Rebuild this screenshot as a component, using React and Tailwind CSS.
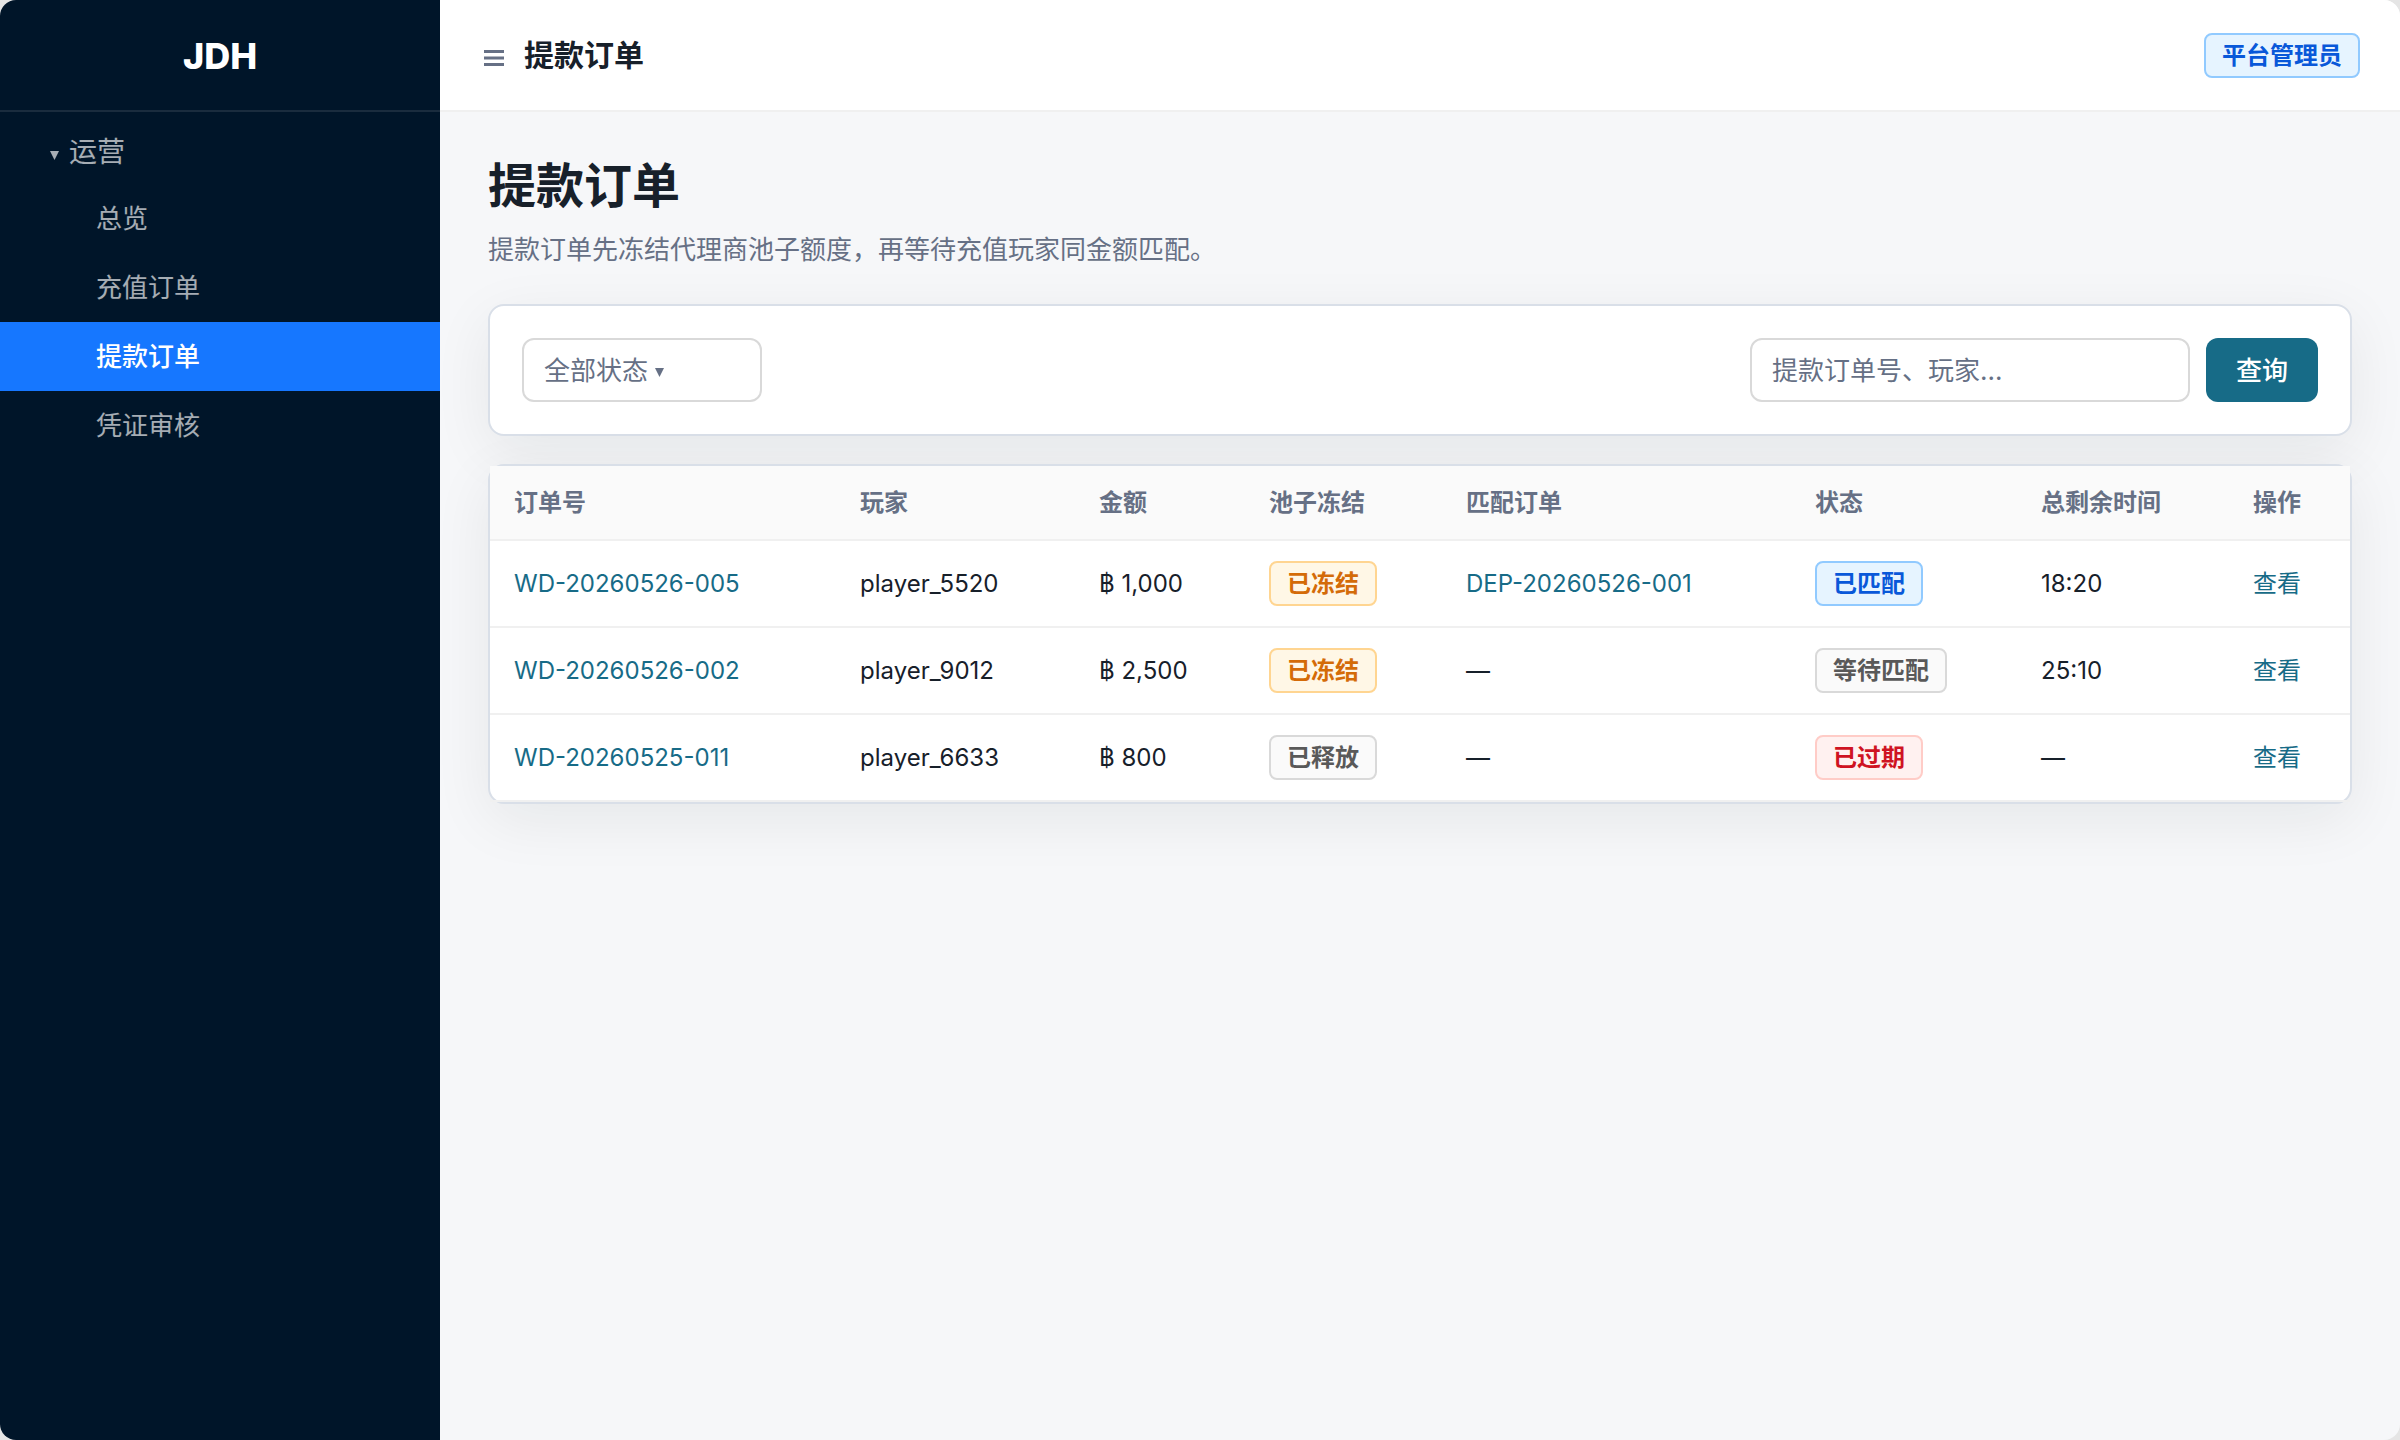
const NAV_ITEMS = [
  { label: "总览" },
  { label: "充值订单" },
  { label: "提款订单", active: true },
  { label: "凭证审核" },
];

const COLUMNS = [
  { label: "订单号", width: "w-[346px]" },
  { label: "玩家", width: "w-[239px]" },
  { label: "金额", width: "w-[170px]" },
  { label: "池子冻结", width: "w-[197px]" },
  { label: "匹配订单", width: "w-[349px]" },
  { label: "状态", width: "w-[226px]" },
  { label: "总剩余时间", width: "w-[212px]" },
  { label: "操作", width: "w-[121px]" },
];

const ORDERS = [
  {
    id: "WD-20260526-005",
    player: "player_5520",
    amount: "฿ 1,000",
    pool: { tone: "orange", label: "已冻结" },
    match: "DEP-20260526-001",
    status: { tone: "blue", label: "已匹配" },
    remaining: "18:20",
  },
  {
    id: "WD-20260526-002",
    player: "player_9012",
    amount: "฿ 2,500",
    pool: { tone: "orange", label: "已冻结" },
    match: null,
    status: { tone: "gray", label: "等待匹配" },
    remaining: "25:10",
  },
  {
    id: "WD-20260525-011",
    player: "player_6633",
    amount: "฿ 800",
    pool: { tone: "gray", label: "已释放" },
    match: null,
    status: { tone: "red", label: "已过期" },
    remaining: "—",
  },
];

const TONES = {
  blue: "border-[#91caff] bg-[#e6f4ff] text-[#0958d9]",
  orange: "border-[#ffd591] bg-[#fff7e6] text-[#d46b08]",
  gray: "border-[#d9d9d9] bg-[#fafafa] text-[#595959]",
  red: "border-[#ffccc7] bg-[#fff1f0] text-[#cf1322]",
};

function Badge({ tone, children }) {
  return (
    <span
      className={`inline-block rounded-lg border-2 px-4 align-top text-2xl leading-[41px] font-semibold whitespace-nowrap ${TONES[tone]}`}
    >
      {children}
    </span>
  );
}

function Caret() {
  return (
    <svg viewBox="0 0 9 9" className="h-[9px] w-[9px] shrink-0" fill="currentColor" aria-hidden="true">
      <path d="M0 0h9L4.5 9z" />
    </svg>
  );
}

function Sidebar() {
  return (
    <aside className="w-[440px] shrink-0 bg-[#001529] text-white/65">
      <div className="flex h-28 items-center justify-center border-b-2 border-white/10 pt-0.5 text-4xl font-extrabold text-white">
        JDH
      </div>
      <nav className="pt-2">
        <button
          type="button"
          aria-expanded="true"
          className="flex w-full items-center gap-2.5 py-2.5 pl-[50px] text-[28px] leading-[44px]"
        >
          <span className="pt-1.5">
            <Caret />
          </span>
          运营
        </button>
        <ul>
          {NAV_ITEMS.map((item) => (
            <li key={item.label}>
              <a
                href="#"
                aria-current={item.active ? "page" : undefined}
                className={`block py-3.5 pl-24 text-[26px] leading-[41px] ${
                  item.active ? "bg-[#1677ff] font-medium text-white" : ""
                }`}
              >
                {item.label}
              </a>
            </li>
          ))}
        </ul>
      </nav>
    </aside>
  );
}

function TopBar() {
  return (
    <header className="flex h-28 items-center justify-between border-b-2 border-[#f0f0f0] bg-white pr-10 pl-11">
      <div className="flex items-center gap-5">
        <button type="button" aria-label="菜单" className="pt-1.5 text-[#667085]">
          <svg viewBox="0 0 20 16" className="h-4 w-5" fill="currentColor" aria-hidden="true">
            <path d="M0 0h20v3H0zM0 6.5h20v3H0zM0 13h20v3H0z" />
          </svg>
        </button>
        <span className="text-[30px] leading-[44px] font-semibold">提款订单</span>
      </div>
      <Badge tone="blue">平台管理员</Badge>
    </header>
  );
}

function Filters() {
  return (
    <form className="flex items-center justify-between rounded-2xl border-2 border-[#d9dfe8] bg-white p-8 shadow-[0_16px_60px_rgba(20,24,32,0.07)]">
      <div className="flex h-16 w-60 items-center gap-1.5 rounded-xl border-2 border-[#d9d9d9] px-5 text-[26px] text-[#667085]">
        <select aria-label="状态" className="appearance-none bg-transparent leading-[41px] outline-none">
          <option>全部状态</option>
        </select>
        <span className="pt-1">
          <Caret />
        </span>
      </div>
      <div className="flex gap-4">
        <input
          type="text"
          aria-label="搜索"
          placeholder="提款订单号、玩家..."
          className="h-16 w-[440px] rounded-xl border-2 border-[#d9d9d9] bg-white px-5 text-[26px] leading-[41px] outline-none placeholder:text-[#667085]"
        />
        <button type="submit" className="h-16 w-28 rounded-xl bg-[#176b87] text-[26px] leading-[41px] font-medium text-white">
          查询
        </button>
      </div>
    </form>
  );
}

function OrdersTable() {
  return (
    <div className="mt-7 rounded-2xl border-2 border-[#d9dfe8] bg-white shadow-[0_16px_60px_rgba(20,24,32,0.07)]">
      <table className="w-full table-fixed border-separate border-spacing-0 text-left text-2xl leading-[41px]">
        <colgroup>
          {COLUMNS.map((column) => (
            <col key={column.label} className={column.width} />
          ))}
        </colgroup>
        <thead>
          <tr>
            {COLUMNS.map((column) => (
              <th
                key={column.label}
                scope="col"
                className="border-b-2 border-[#f0f0f0] bg-[#fafafa] px-6 py-4 font-semibold text-[#667085]"
              >
                {column.label}
              </th>
            ))}
          </tr>
        </thead>
        <tbody className="[&_td]:border-b-2 [&_td]:border-[#f0f0f0] [&_td]:px-6 [&_td]:py-5">
          {ORDERS.map((order) => (
            <tr key={order.id}>
              <td>
                <a href="#" className="text-[#176b87]">{order.id}</a>
              </td>
              <td>{order.player}</td>
              <td>{order.amount}</td>
              <td>
                <Badge tone={order.pool.tone}>{order.pool.label}</Badge>
              </td>
              <td>
                {order.match ? <a href="#" className="text-[#176b87]">{order.match}</a> : "—"}
              </td>
              <td>
                <Badge tone={order.status.tone}>{order.status.label}</Badge>
              </td>
              <td>{order.remaining}</td>
              <td>
                <a href="#" className="text-[#176b87]">查看</a>
              </td>
            </tr>
          ))}
        </tbody>
      </table>
    </div>
  );
}

export default function App() {
  return (
    <div className="min-h-screen bg-[#e5e5e5] font-['Inter','Noto_Sans_CJK_SC',sans-serif] text-[#17202a]">
      <div className="flex min-h-screen overflow-hidden rounded-2xl bg-[#f6f7f9]">
        <Sidebar />
        <div className="min-w-0 flex-1">
          <TopBar />
          <main className="px-12 pt-10">
            <h1 className="text-5xl leading-[68px] font-bold">提款订单</h1>
            <p className="mt-2 mb-8 text-[26px] leading-[44px] text-[#667085]">
              提款订单先冻结代理商池子额度，再等待充值玩家同金额匹配。
            </p>
            <Filters />
            <OrdersTable />
          </main>
        </div>
      </div>
    </div>
  );
}
